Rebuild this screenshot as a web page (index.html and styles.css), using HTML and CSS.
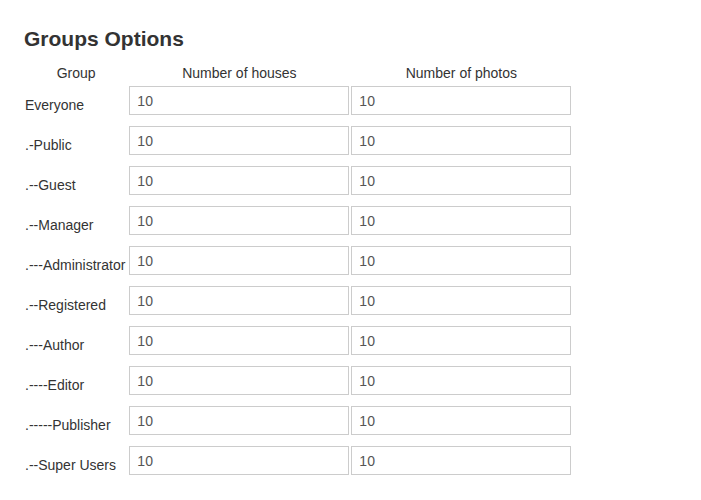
FILE: index.html
```html
<!DOCTYPE html>
<html>
<head>
<meta charset="utf-8">
<link rel="stylesheet" href="styles.css">
</head>
<body>
<div class="page">
  <h2 class="title">Groups Options</h2>
  <table class="groups">
    <thead>
      <tr><th>Group</th><th>Number of houses</th><th>Number of photos</th></tr>
    </thead>
    <tbody>
      <tr><td class="lbl">Everyone</td><td><input class="field" type="text" value="10"></td><td><input class="field" type="text" value="10"></td></tr>
      <tr><td class="lbl">.-Public</td><td><input class="field" type="text" value="10"></td><td><input class="field" type="text" value="10"></td></tr>
      <tr><td class="lbl">.--Guest</td><td><input class="field" type="text" value="10"></td><td><input class="field" type="text" value="10"></td></tr>
      <tr><td class="lbl">.--Manager</td><td><input class="field" type="text" value="10"></td><td><input class="field" type="text" value="10"></td></tr>
      <tr><td class="lbl">.---Administrator</td><td><input class="field" type="text" value="10"></td><td><input class="field" type="text" value="10"></td></tr>
      <tr><td class="lbl">.--Registered</td><td><input class="field" type="text" value="10"></td><td><input class="field" type="text" value="10"></td></tr>
      <tr><td class="lbl">.---Author</td><td><input class="field" type="text" value="10"></td><td><input class="field" type="text" value="10"></td></tr>
      <tr><td class="lbl">.----Editor</td><td><input class="field" type="text" value="10"></td><td><input class="field" type="text" value="10"></td></tr>
      <tr><td class="lbl">.-----Publisher</td><td><input class="field" type="text" value="10"></td><td><input class="field" type="text" value="10"></td></tr>
      <tr><td class="lbl">.--Super Users</td><td><input class="field" type="text" value="10"></td><td><input class="field" type="text" value="10"></td></tr>
    </tbody>
  </table>
</div>
</body>
</html>
```
FILE: styles.css
```css
html, body {
  margin: 0;
  padding: 0;
  background: #fff;
}
body {
  font-family: "Liberation Sans", Arial, sans-serif;
  font-size: 14px;
  line-height: 18px;
  color: #333;
}
.page {
  padding: 23px 23px 0 23px;
}
.title {
  margin: 0 0 0 1px;
  font-size: 21px;
  line-height: 32px;
  font-weight: bold;
  color: #333;
}
.groups {
  border-collapse: separate;
  border-spacing: 2px;
  margin-top: 7px;
}
.groups th {
  font-weight: normal;
  text-align: center;
  padding: 0 0 2px 0;
  line-height: 18px;
}
.groups td {
  padding: 0;
  vertical-align: middle;
}
.groups .lbl {
  white-space: nowrap;
  text-align: left;
  padding: 0 2px 0 0;
}
.field {
  display: block;
  box-sizing: border-box;
  width: 220px;
  height: 29px;
  margin: 0 0 9px 0;
  padding: 4px 7px;
  border: 1px solid #ccc;
  border-radius: 0;
  font-family: "Liberation Sans", Arial, sans-serif;
  font-size: 14px;
  color: #555;
  background: #fff;
  outline: none;
}
```
